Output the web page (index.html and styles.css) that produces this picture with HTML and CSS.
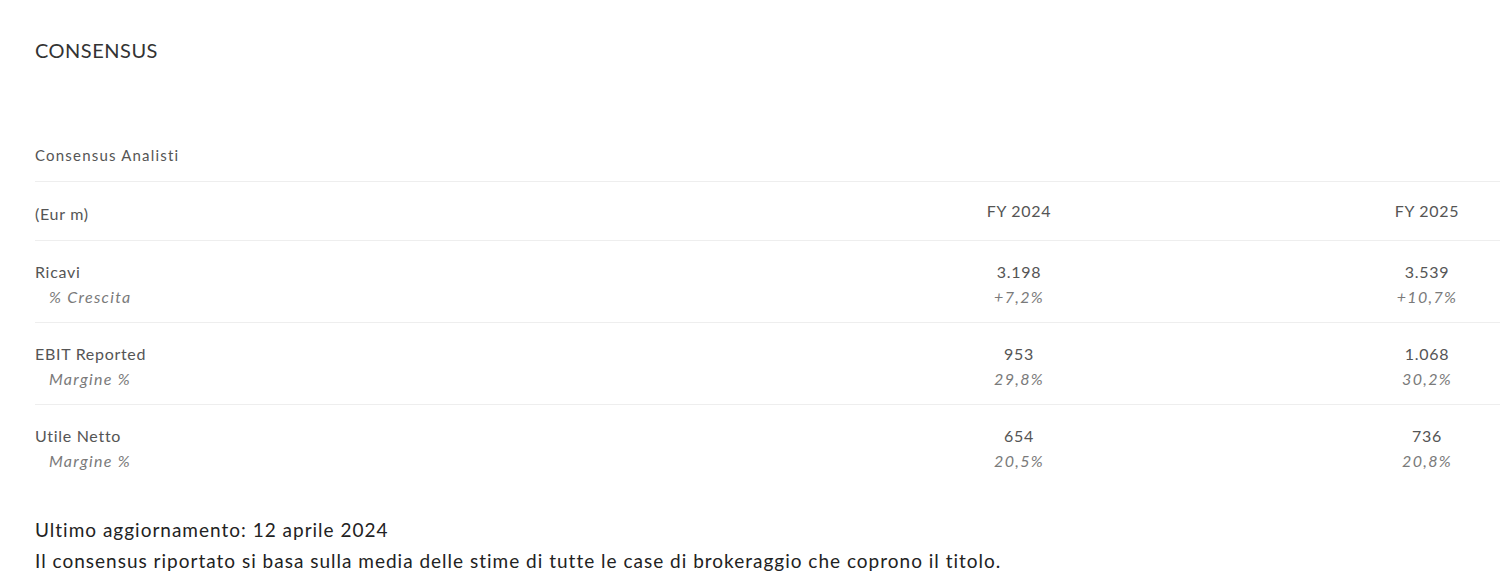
FILE: index.html
```html
<!DOCTYPE html>
<html lang="it">
<head>
<meta charset="utf-8">
<title>Consensus</title>
<link rel="stylesheet" href="styles.css">
</head>
<body>
<main class="page">
  <h2 class="title">CONSENSUS</h2>
  <section class="consensus">
    <div class="caption">Consensus Analisti</div>
    <div class="row head">
      <div class="label">(Eur m)</div>
      <div class="val year">FY 2024</div>
      <div class="val year">FY 2025</div>
    </div>
    <div class="row">
      <div class="label"><div>Ricavi</div><div class="sub">% Crescita</div></div>
      <div class="val"><div>3.198</div><div class="sub">+7,2%</div></div>
      <div class="val"><div>3.539</div><div class="sub">+10,7%</div></div>
    </div>
    <div class="row">
      <div class="label"><div>EBIT Reported</div><div class="sub">Margine %</div></div>
      <div class="val"><div>953</div><div class="sub">29,8%</div></div>
      <div class="val"><div>1.068</div><div class="sub">30,2%</div></div>
    </div>
    <div class="row last">
      <div class="label"><div>Utile Netto</div><div class="sub">Margine %</div></div>
      <div class="val"><div>654</div><div class="sub">20,5%</div></div>
      <div class="val"><div>736</div><div class="sub">20,8%</div></div>
    </div>
  </section>
  <div class="notes">
    <p>Ultimo aggiornamento: 12 aprile 2024</p>
    <p>Il consensus riportato si basa sulla media delle stime di tutte le case di brokeraggio che coprono il titolo.</p>
  </div>
</main>
</body>
</html>
```
FILE: styles.css
```css
html, body {
  margin: 0;
  padding: 0;
  background: #fff;
}
body {
  font-family: "Lato", "Noto Sans", sans-serif;
  color: #444;
}
.page {
  padding: 38px 0 0 35px;
}
.title {
  margin: 0;
  font-size: 20px;
  font-weight: 400;
  line-height: 24px;
  color: #333;
  letter-spacing: 0.5px;
}
.consensus {
  margin-top: 83px;
}
.caption {
  font-size: 15px;
  line-height: 20px;
  color: #555;
  padding-bottom: 16px;
  letter-spacing: 1.2px;
}
.row {
  display: grid;
  grid-template-columns: 649px 670px 146px;
  border-top: 1px solid #eeeeee;
  padding: 18px 0 13px;
  font-size: 16px;
  line-height: 25px;
  color: #555;
  letter-spacing: 0.7px;
}
.row.head {
  padding: 19px 0 14px;
}
.row.head .year {
  margin-top: -3px;
}
.row.last {
  padding-bottom: 41px;
}
.val {
  text-align: center;
}
.sub {
  font-style: italic;
  color: #7a7a7a;
  letter-spacing: 1.3px;
}
.label .sub {
  padding-left: 14px;
}
.notes {
  font-size: 19px;
  line-height: 31px;
  color: #222;
  letter-spacing: 1px;
}
.notes p {
  margin: 0;
}
```
